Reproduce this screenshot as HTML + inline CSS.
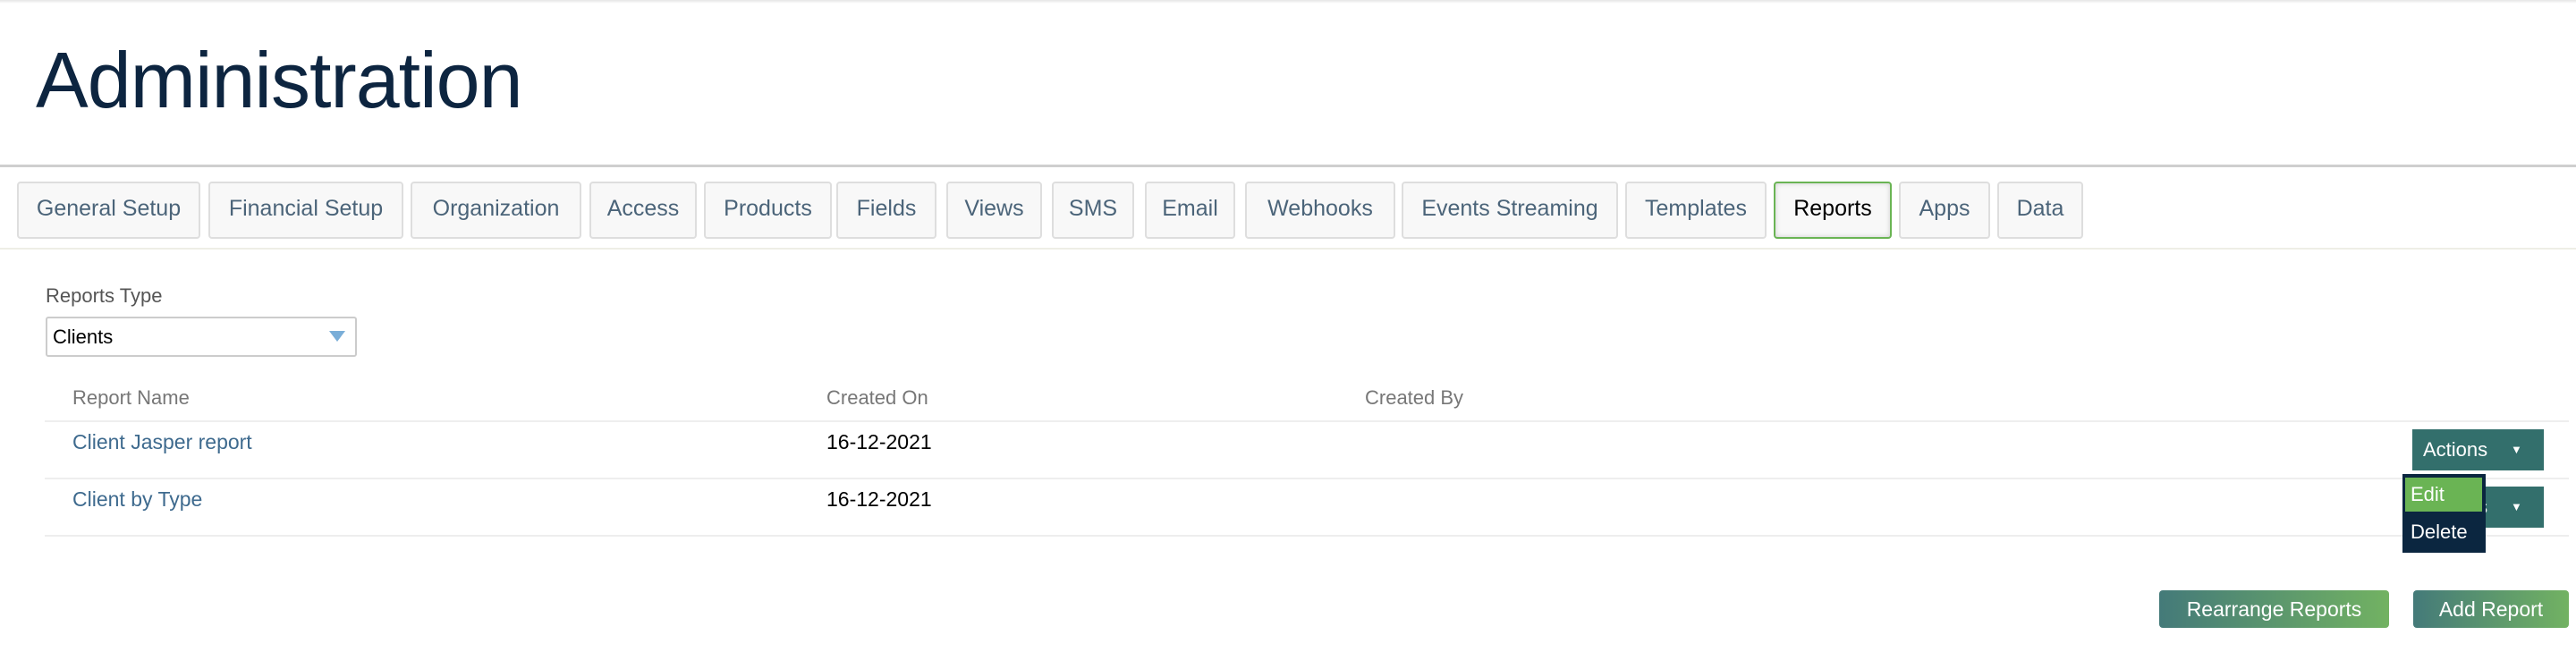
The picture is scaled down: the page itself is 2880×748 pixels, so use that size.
<!DOCTYPE html>
<html><head><meta charset="utf-8"><style>
*{margin:0;padding:0;box-sizing:border-box}
body{width:2880px;height:748px;background:#fff;font-family:"Liberation Sans",sans-serif;position:relative;overflow:hidden}
.abs{position:absolute}
.topshadow{left:0;top:0;width:2880px;height:4px;background:linear-gradient(#e6e6e6,#fff)}
h1{position:absolute;left:40px;top:40px;font-size:88px;font-weight:normal;color:#0d2540;letter-spacing:-1px;line-height:100px}
.line1{left:0;top:184px;width:2880px;height:3px;background:#cfcfcf}
.line2{left:0;top:277px;width:2880px;height:2px;background:#eeeee6}
.tab{position:absolute;top:203px;height:64px;background:#f8f8f8;border:2px solid #dedede;border-radius:4px;color:#4b6479;font-size:25px;display:flex;align-items:center;justify-content:center;padding-bottom:4px}
.tab.act{border-color:#6ab454;color:#000;box-shadow:inset 0 0 6px #ccc}
.lbl{left:51px;top:318px;font-size:22px;color:#555}
.sel{left:51px;top:354px;width:348px;height:45px;border:2px solid #ccc;border-radius:3px;font-size:22px;color:#000;padding:8px 0 0 6px}
.tri{left:368px;top:370px;width:0;height:0;border-left:9px solid transparent;border-right:9px solid transparent;border-top:12px solid #7aaed8}
.th{top:432px;font-size:22px;color:#777}
.hr{left:50px;width:2822px;height:2px;background:#eee}
.td{font-size:23px}
.link{color:#3e6a8e}
.btnA{left:2697px;width:147px;height:46px;background:#336f6c;color:#fff;font-size:22px;padding:10px 0 0 12px}
.btnA span{position:absolute;left:110px;top:15px;font-size:13px}
.menu{left:2686px;top:530px;width:93px;height:88px;background:#0b2640}
.edit{left:2689px;top:534px;width:86px;height:38px;background:#6ab454;color:#fff;font-size:22px;padding:6px 0 0 6px}
.del{left:2695px;top:582px;color:#fff;font-size:22px}
.gb{top:660px;height:42px;border-radius:4px;background:linear-gradient(90deg,#447a79,#72b262);color:#fff;font-size:23px;display:flex;align-items:center;justify-content:center}
</style></head><body>
<div class="abs topshadow"></div>
<h1>Administration</h1>
<div class="abs line1"></div>
<div class="tab" style="left:19px;width:205px">General Setup</div>
<div class="tab" style="left:233px;width:218px">Financial Setup</div>
<div class="tab" style="left:459px;width:191px">Organization</div>
<div class="tab" style="left:659px;width:120px">Access</div>
<div class="tab" style="left:787px;width:143px">Products</div>
<div class="tab" style="left:935px;width:112px">Fields</div>
<div class="tab" style="left:1058px;width:107px">Views</div>
<div class="tab" style="left:1176px;width:92px">SMS</div>
<div class="tab" style="left:1280px;width:101px">Email</div>
<div class="tab" style="left:1392px;width:168px">Webhooks</div>
<div class="tab" style="left:1567px;width:242px">Events Streaming</div>
<div class="tab" style="left:1817px;width:158px">Templates</div>
<div class="tab act" style="left:1983px;width:132px">Reports</div>
<div class="tab" style="left:2123px;width:102px">Apps</div>
<div class="tab" style="left:2233px;width:96px">Data</div>
<div class="abs line2"></div>
<div class="abs lbl">Reports Type</div>
<div class="abs sel">Clients</div>
<div class="abs tri"></div>
<div class="abs th" style="left:81px">Report Name</div>
<div class="abs th" style="left:924px">Created On</div>
<div class="abs th" style="left:1526px">Created By</div>
<div class="abs hr" style="top:470px"></div>
<div class="abs hr" style="top:534px"></div>
<div class="abs hr" style="top:598px"></div>
<div class="abs td link" style="left:81px;top:481px">Client Jasper report</div>
<div class="abs td" style="left:924px;top:481px">16-12-2021</div>
<div class="abs td link" style="left:81px;top:545px">Client by Type</div>
<div class="abs td" style="left:924px;top:545px">16-12-2021</div>
<div class="abs btnA" style="top:480px">Actions<span>▼</span></div>
<div class="abs btnA" style="top:544px">Actions<span>▼</span></div>
<div class="abs menu"></div>
<div class="abs edit">Edit</div>
<div class="abs del">Delete</div>
<div class="abs gb" style="left:2414px;width:257px">Rearrange Reports</div>
<div class="abs gb" style="left:2698px;width:174px">Add Report</div>
</body></html>
